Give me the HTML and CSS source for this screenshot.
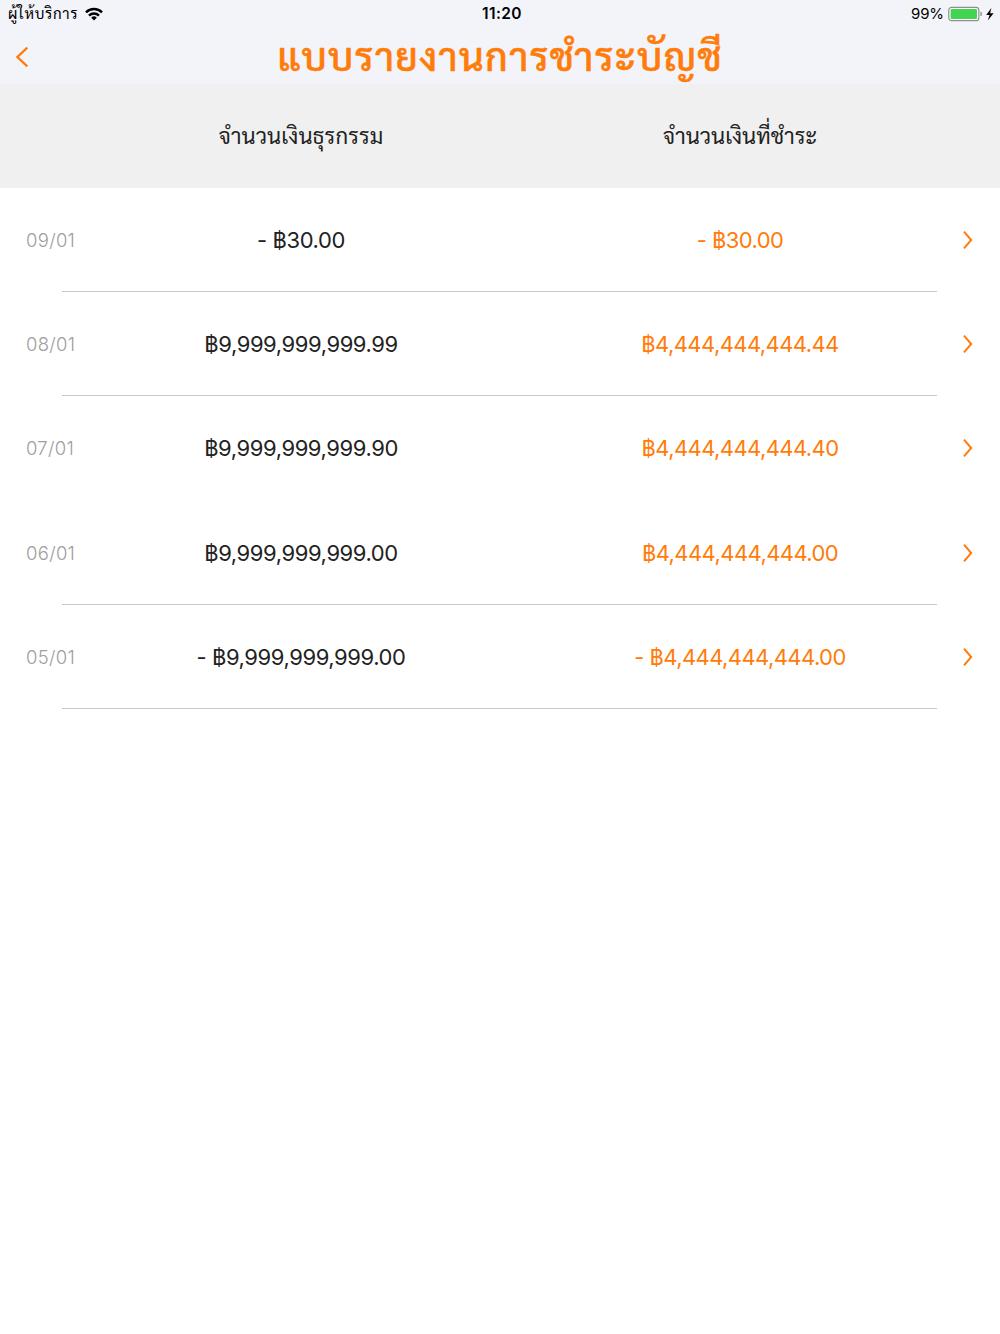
FILE: index.html
```html
<!DOCTYPE html>
<html lang="th">
<head>
<meta charset="utf-8">
<title>แบบรายงานการชำระบัญชี</title>
<link rel="stylesheet" href="styles.css">
</head>
<body>
<header class="top">
  <div class="status">
    <div class="carrier"><span class="carrier-name">ผู้ให้บริการ</span>
      <svg class="wifi" viewBox="0 0 18 14" width="18" height="14"><g fill="none" stroke="#000" stroke-width="2.5"><path d="M1 5.4a11.4 11.4 0 0 1 16 0"/><path d="M4 8.6a7.2 7.2 0 0 1 10 0"/></g><path d="M9 13.4 6.2 10.7a4 4 0 0 1 5.6 0z"/></svg>
    </div>
    <div class="clock">11:20</div>
    <div class="power"><span class="percent">99%</span>
      <svg class="battery" viewBox="0 0 47 16" width="47" height="16"><rect x=".8" y="1.3" width="30" height="13.4" rx="2.8" fill="#fff" stroke="#8d8f93" stroke-width="1.2"/><rect x="2.6" y="3" width="26.4" height="10" rx="1" fill="#42d451"/><path d="M32.8 5.8q2 2.1 0 4.2z" fill="#8d8f93" stroke="#8d8f93" stroke-width=".6"/><path d="M43.4 2 38.2 9h3.4l-1.8 5.4L45.6 7.2h-3.5z"/></svg>
    </div>
  </div>
  <div class="nav">
    <svg class="back" viewBox="0 0 14 22" width="14" height="22"><path d="M12.3 1.6 2.4 11 12.3 20.4"/></svg>
    <h1 class="title">แบบรายงานการชำระบัญชี</h1>
  </div>
</header>
<div class="grid heading">
  <span class="label first">จำนวนเงินธุรกรรม</span>
  <span class="label second">จำนวนเงินที่ชำระ</span>
</div>
<main class="list">
  <div class="grid row"><span class="date">09/01</span><span class="amount">- ฿30.00</span><span class="amount paid">- ฿30.00</span><svg class="chevron" viewBox="0 0 12 20" width="12" height="20"><path d="M2 1.6 9.2 10 2 18.4"/></svg></div>
  <div class="grid row"><span class="date">08/01</span><span class="amount">฿9,999,999,999.99</span><span class="amount paid">฿4,444,444,444.44</span><svg class="chevron" viewBox="0 0 12 20" width="12" height="20"><path d="M2 1.6 9.2 10 2 18.4"/></svg></div>
  <div class="grid row plain"><span class="date">07/01</span><span class="amount">฿9,999,999,999.90</span><span class="amount paid">฿4,444,444,444.40</span><svg class="chevron" viewBox="0 0 12 20" width="12" height="20"><path d="M2 1.6 9.2 10 2 18.4"/></svg></div>
  <div class="grid row"><span class="date">06/01</span><span class="amount">฿9,999,999,999.00</span><span class="amount paid">฿4,444,444,444.00</span><svg class="chevron" viewBox="0 0 12 20" width="12" height="20"><path d="M2 1.6 9.2 10 2 18.4"/></svg></div>
  <div class="grid row"><span class="date">05/01</span><span class="amount">- ฿9,999,999,999.00</span><span class="amount paid">- ฿4,444,444,444.00</span><svg class="chevron" viewBox="0 0 12 20" width="12" height="20"><path d="M2 1.6 9.2 10 2 18.4"/></svg></div>
</main>
</body>
</html>
```
FILE: styles.css
```css
* { box-sizing: border-box; }
body { margin: 0; min-height: 1334px; background: #fff; color: #222; font-family: Inter, Thonburi, Umpush, Laksaman, Sarabun, Kinnari, Norasi, "Tlwg Typo", FreeSans, FreeSerif, "Droid Sans Thai", "Noto Serif Thai", sans-serif; }
svg { display: block; flex: none; }
.top { height: 84px; background: #f3f4f9; }
.status { display: grid; grid-template-columns: 1fr 60px 1fr; height: 28px; align-items: center; padding: 0 5px 0 8px; color: #000; font-size: 15px; line-height: 20px; }
.carrier, .power { display: flex; align-items: center; white-space: nowrap; }
.carrier { gap: 7px; }
.carrier-name { font-size: 15px; width: 70px; letter-spacing: .7px; }
.clock { padding-left: 1px; text-align: center; font-weight: 600; font-size: 15.5px; letter-spacing: .4px; }
.power { justify-content: flex-end; gap: 4px; }
.percent { letter-spacing: -.1px; }
.nav { display: grid; grid-template-columns: 60px 1fr 60px; height: 56px; align-items: center; }
.back { margin: 2px 0 0 15px; }
.back path, .chevron path { fill: none; stroke: #ff7c0a; stroke-width: 2; }
.back path { stroke-width: 2.3; }
.title { margin: 2px 0 0; text-align: center; color: #ff7c0a; font-size: 39px; line-height: 54px; font-weight: 500; letter-spacing: 1.25px; white-space: nowrap; -webkit-text-stroke: .5px #ff7c0a; }
.grid { display: grid; grid-template-columns: 82px 438px 440px 40px; align-items: center; white-space: nowrap; }
.heading { height: 104px; padding-bottom: 3px; background: #f0f0f0; }
.label { text-align: center; font-size: 22px; letter-spacing: .15px; }
.first { grid-column: 2; }
.second { grid-column: 3; letter-spacing: .05px; }
.row { height: 104.2px; background: linear-gradient(#c8c8ca, #c8c8ca) 62px 103px / 875px 1.3px no-repeat; }
.plain { background: none; }
.date { padding-left: 26px; color: #9e9e9e; font-size: 18.5px; font-weight: 300; letter-spacing: .3px; }
.amount { text-align: center; font-size: 22px; letter-spacing: -.42px; }
.paid { color: #ff7c0a; letter-spacing: -.58px; }
.chevron { margin-left: 2px; }
```
